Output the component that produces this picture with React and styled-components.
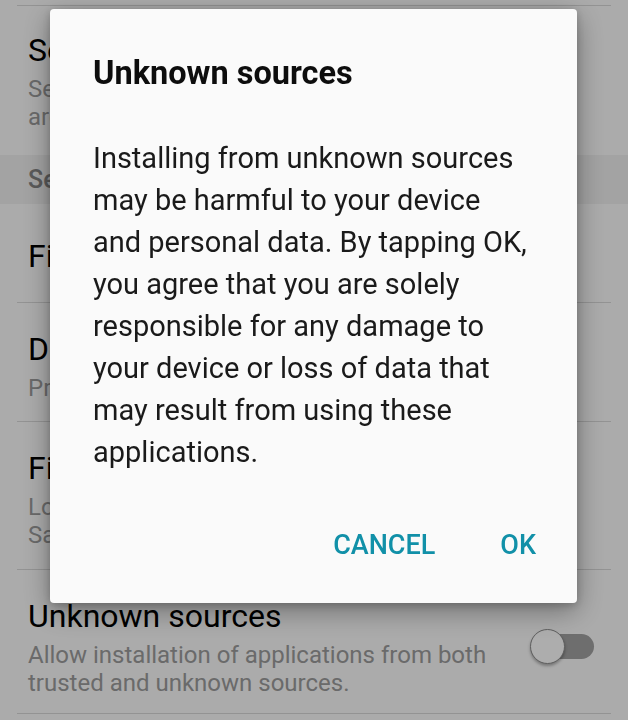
import React from "react";
import styled, { createGlobalStyle } from "styled-components";

const GlobalStyle = createGlobalStyle`
  html, body {
    margin: 0;
    padding: 0;
    background: #fcfcfc;
    font-family: Roboto, "Liberation Sans", sans-serif;
    overflow: hidden;
  }
`;

const Page = styled.div`
  width: 628px;
  height: 720px;
  background: #fcfcfc;
  display: flex;
  flex-direction: column;
`;

const TopGap = styled.div`
  height: 5px;
`;

const Divider = styled.div`
  height: 1px;
  margin: 0 17px;
  background: #d9d9d9;
`;

const Row = styled.div`
  box-sizing: border-box;
  height: ${(props) => props.height}px;
  display: flex;
  align-items: center;
  gap: 10px;
  padding: ${(props) => props.shift || 0}px 34px 0 28px;
`;

const TextCol = styled.div`
  flex: 1;
  display: flex;
  flex-direction: column;
  gap: 5px;
  min-width: 0;
`;

const RowTitle = styled.div`
  font-size: 32px;
  line-height: 40px;
  color: #000;
  white-space: nowrap;
`;

const RowSub = styled.div`
  font-size: 24px;
  line-height: 28px;
  color: #9c9c9c;
  white-space: pre-line;
`;

const SectionHeader = styled.div`
  height: 49px;
  display: flex;
  align-items: center;
  padding-left: 28px;
  background: #f0f0f0;
  font-size: 25px;
  font-weight: 500;
  color: #858585;
`;

const Toggle = styled.div`
  position: relative;
  width: 64px;
  height: 35px;
  flex-shrink: 0;
`;

const Track = styled.div`
  position: absolute;
  left: 18px;
  right: 0;
  top: 5px;
  height: 25px;
  border-radius: 13px;
  background: #a2a2a2;
`;

const Thumb = styled.div`
  position: absolute;
  left: 0;
  top: 0;
  width: 33px;
  height: 33px;
  border-radius: 50%;
  background: #ffffff;
  border: 1px solid #8c8c8c;
  box-shadow: 0 2px 3px rgba(0, 0, 0, 0.3);
`;

const Scrim = styled.div`
  position: fixed;
  inset: 0;
  background: rgba(0, 0, 0, 0.32);
  display: flex;
  align-items: flex-start;
  padding: 9px 0 0 50px;
`;

const Dialog = styled.div`
  width: 527px;
  box-sizing: border-box;
  padding: 44px 43px 38px 43px;
  background: #fafafa;
  border-radius: 4px;
  box-shadow: 0 8px 28px rgba(0, 0, 0, 0.35), 0 2px 8px rgba(0, 0, 0, 0.2);
  display: flex;
  flex-direction: column;
`;

const DialogTitle = styled.div`
  font-size: 32.5px;
  line-height: 40px;
  font-weight: 700;
  color: #0d0d0d;
`;

const DialogBody = styled.div`
  margin-top: 44px;
  font-size: 29px;
  line-height: 42px;
  color: #1a1a1a;
`;

const Actions = styled.div`
  margin-top: 52px;
  display: flex;
  justify-content: flex-end;
  gap: 65px;
  margin-right: -2px;
`;

const ActionButton = styled.button`
  border: none;
  background: transparent;
  padding: 0;
  font-family: inherit;
  font-size: 27px;
  line-height: 40px;
  font-weight: 500;
  color: #1190a8;
  cursor: pointer;
`;

const Item = ({ height, shift, title, sub, toggle }) => (
  <Row height={height} shift={shift}>
    <TextCol>
      <RowTitle>{title}</RowTitle>
      {sub && <RowSub>{sub}</RowSub>}
    </TextCol>
    {toggle && (
      <Toggle>
        <Track />
        <Thumb />
      </Toggle>
    )}
  </Row>
);

export default function App() {
  return (
    <>
      <GlobalStyle />
      <Page>
        <TopGap />
        <Divider />
        <Item
          height={149}
          title="Secure lock settings"
          sub={"Set your secure lock functions, such as Auto lock,\nare applied when the screen turns off."}
        />
        <SectionHeader>Security</SectionHeader>
        <Item height={98} shift={6} title="Fingerprints" />
        <Divider />
        <Item
          height={118}
          shift={6}
          title="Device administrators"
          sub="Prevent changes to device settings."
        />
        <Divider />
        <Item
          height={147}
          shift={6}
          title="Find My Mobile"
          sub={"Locate and control your device remotely using your\nSamsung account."}
        />
        <Divider />
        <Item
          height={143}
          shift={10}
          title="Unknown sources"
          sub="Allow installation of applications from both trusted and unknown sources."
          toggle
        />
        <Divider />
      </Page>
      <Scrim>
        <Dialog>
          <DialogTitle>Unknown sources</DialogTitle>
          <DialogBody>
            Installing from unknown sources may be harmful to your device and
            personal data. By tapping OK, you agree that you are solely
            responsible for any damage to your device or loss of data that may
            result from using these applications.
          </DialogBody>
          <Actions>
            <ActionButton>CANCEL</ActionButton>
            <ActionButton>OK</ActionButton>
          </Actions>
        </Dialog>
      </Scrim>
    </>
  );
}
